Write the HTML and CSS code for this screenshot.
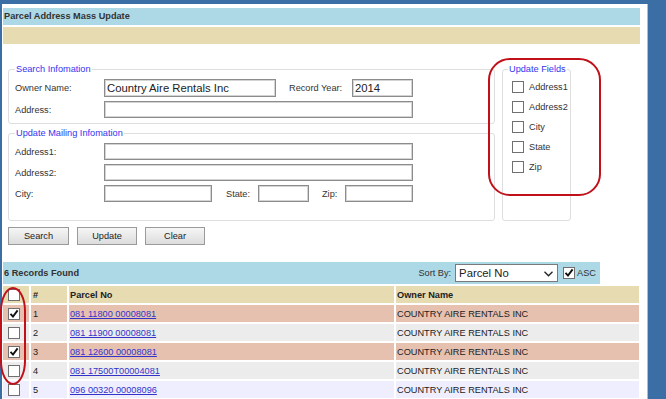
FILE: index.html
```html
<!DOCTYPE html>
<html lang="en">
<head>
    <meta charset="UTF-8">
    <title>Parcel Address Mass Update</title>
    <link rel="stylesheet" href="styles.css">
</head>
<body>
    <div class="page">
        <div class="panel">
            <!-- Title and message bars -->
            <div class="title-bar">Parcel Address Mass Update</div>
            <div class="message-bar"></div>

            <!-- Search and update forms -->
            <div class="search-area">
                <div class="search-left">
                    <fieldset class="group group-search">
                        <legend>Search Infomation</legend>
                        <div class="field-row field-row-tall">
                            <label class="lbl">Owner Name:</label>
                            <input class="txt w-owner" type="text" value="Country Aire Rentals Inc">
                            <label class="lbl lbl-year">Record Year:</label>
                            <input class="txt w-year" type="text" value="2014">
                        </div>
                        <div class="field-row">
                            <label class="lbl">Address:</label>
                            <input class="txt w-full" type="text">
                        </div>
                    </fieldset>

                    <fieldset class="group group-mailing">
                        <legend>Update Mailing Infomation</legend>
                        <div class="field-row">
                            <label class="lbl">Address1:</label>
                            <input class="txt w-full" type="text">
                        </div>
                        <div class="field-row">
                            <label class="lbl">Address2:</label>
                            <input class="txt w-full" type="text">
                        </div>
                        <div class="field-row">
                            <label class="lbl">City:</label>
                            <input class="txt w-city" type="text">
                            <label class="lbl lbl-state">State:</label>
                            <input class="txt w-state" type="text">
                            <label class="lbl lbl-zip">Zip:</label>
                            <input class="txt w-zip" type="text">
                        </div>
                    </fieldset>
                </div>

                <fieldset class="group group-fields">
                    <legend>Update Fields</legend>
                    <div class="check-row"><span class="cb"></span>Address1</div>
                    <div class="check-row"><span class="cb"></span>Address2</div>
                    <div class="check-row"><span class="cb"></span>City</div>
                    <div class="check-row"><span class="cb"></span>State</div>
                    <div class="check-row"><span class="cb"></span>Zip</div>
                </fieldset>
            </div>

            <!-- Action buttons -->
            <div class="actions">
                <button class="btn btn-search">Search</button>
                <button class="btn">Update</button>
                <button class="btn">Clear</button>
            </div>

            <!-- Results -->
            <div class="results-bar">
                <span class="results-count">6 Records Found</span>
                <div class="sort">
                    <span class="sort-label">Sort By:</span>
                    <div class="select">
                        <span>Parcel No</span>
                        <svg class="chevron" width="9" height="6" viewBox="0 0 9 6"><path d="M0.5 0.8 L4.5 4.8 L8.5 0.8" fill="none" stroke="#222" stroke-width="1.3"/></svg>
                    </div>
                    <span class="cb checked"><svg width="10" height="10" viewBox="0 0 10 10"><path d="M1.5 4.8 L4 7.6 L8.6 1.4" fill="none" stroke="#111" stroke-width="1.9"/></svg></span>
                    <span class="sort-asc">ASC</span>
                </div>
            </div>

            <table class="results">
                <thead>
                    <tr>
                        <th class="col-check"><span class="cb"></span></th>
                        <th class="col-num">#</th>
                        <th class="col-parcel">Parcel No</th>
                        <th class="col-owner">Owner Name</th>
                    </tr>
                </thead>
                <tbody>
                    <tr class="row-selected">
                        <td class="col-check"><span class="cb checked"><svg width="10" height="10" viewBox="0 0 10 10"><path d="M1.5 4.8 L4 7.6 L8.6 1.4" fill="none" stroke="#111" stroke-width="1.9"/></svg></span></td>
                        <td class="col-num">1</td>
                        <td><a href="#">081 11800 00008081</a></td>
                        <td>COUNTRY AIRE RENTALS INC</td>
                    </tr>
                    <tr class="row-plain">
                        <td class="col-check"><span class="cb"></span></td>
                        <td class="col-num">2</td>
                        <td><a href="#">081 11900 00008081</a></td>
                        <td>COUNTRY AIRE RENTALS INC</td>
                    </tr>
                    <tr class="row-selected">
                        <td class="col-check"><span class="cb checked"><svg width="10" height="10" viewBox="0 0 10 10"><path d="M1.5 4.8 L4 7.6 L8.6 1.4" fill="none" stroke="#111" stroke-width="1.9"/></svg></span></td>
                        <td class="col-num">3</td>
                        <td><a href="#">081 12600 00008081</a></td>
                        <td>COUNTRY AIRE RENTALS INC</td>
                    </tr>
                    <tr class="row-plain">
                        <td class="col-check"><span class="cb"></span></td>
                        <td class="col-num">4</td>
                        <td><a href="#">081 17500T00004081</a></td>
                        <td>COUNTRY AIRE RENTALS INC</td>
                    </tr>
                    <tr class="row-alt">
                        <td class="col-check"><span class="cb"></span></td>
                        <td class="col-num">5</td>
                        <td><a href="#">096 00320 00008096</a></td>
                        <td>COUNTRY AIRE RENTALS INC</td>
                    </tr>
                </tbody>
            </table>
        </div>

        <!-- Red annotation marks drawn over the page -->
        <div class="mark mark-fields"></div>
        <div class="mark mark-checks"></div>
    </div>
</body>
</html>
```

FILE: styles.css
```css
/* Page frame */
body {
    margin: 0;
    background-color: #3b6ea5;
    font-family: "Liberation Sans", Arial, sans-serif;
    font-size: 9.2px;
    color: #333;
    overflow: hidden;
}

.page {
    position: relative;
    height: 399px;
}

/* White panel inside the blue frame */
.panel {
    box-sizing: border-box;
    width: 646px;
    min-height: 395px;
    margin: 4px 0 0 2px;
    padding: 4px 7px 0 1px;
    background-color: #fff;
    border-right: 1px solid #a8bfdc;
}

.title-bar {
    height: 17px;
    line-height: 17px;
    padding-left: 1px;
    background-color: #add8e6;
    font-weight: bold;
    color: #333;
}

.message-bar {
    height: 17px;
    margin-top: 2px;
    background-color: #e6dbb1;
}

/* Forms */
.search-area {
    display: flex;
    gap: 7px;
    margin: 19px 0 0 5px;
}

.search-left {
    display: flex;
    flex-direction: column;
    gap: 3px;
    width: 487px;
}

.group {
    box-sizing: border-box;
    min-width: 0;
    margin: 0;
    border: 1px solid #dedede;
    border-radius: 3px;
}

.group legend {
    padding: 0 1px;
    line-height: 12px;
    color: #3434f0;
    white-space: nowrap;
}

.group-search {
    padding: 4px 6px 5px 6px;
}

.group-mailing {
    padding: 4px 6px 18px 6px;
}

.group-fields {
    width: 69px;
    padding: 2px 0 0 5px;
}

.field-row {
    display: flex;
    align-items: center;
    height: 17px;
    margin-bottom: 4px;
}

.field-row:last-child {
    margin-bottom: 0;
}

.field-row-tall {
    height: 18px;
}

.lbl {
    width: 89px;
    flex: none;
}

.lbl-year { width: 63px; margin-left: 13px; }
.lbl-state { width: 32px; margin-left: 14px; }
.lbl-zip { width: 23px; margin-left: 13px; }

.txt {
    box-sizing: border-box;
    height: 100%;
    margin: 0;
    padding: 0 2px;
    border: 1px solid #8c8c8c;
    box-shadow: inset 0 0 0 1px #d4d4d4;
    font-family: "Liberation Sans", Arial, sans-serif;
    font-size: 11.3px;
    color: #222;
    background-color: #fff;
}

.w-owner { width: 172px; }
.w-year { width: 61px; }
.w-full { width: 309px; }
.w-city { width: 108px; }
.w-state { width: 51px; }
.w-zip { width: 68px; }

.check-row {
    display: flex;
    align-items: center;
    gap: 5px;
    height: 20px;
    margin-left: 4px;
    white-space: nowrap;
}

/* Checkbox boxes */
.cb {
    box-sizing: border-box;
    display: inline-flex;
    align-items: center;
    justify-content: center;
    width: 12px;
    height: 12px;
    flex: none;
    border: 1px solid #707070;
    background-color: #fff;
    vertical-align: middle;
}

/* Buttons */
.actions {
    display: flex;
    gap: 8px;
    margin: 6px 0 0 5px;
}

.btn {
    width: 60px;
    height: 18px;
    padding: 0;
    border: 1px solid #9a9a9a;
    background: linear-gradient(#f6f6f6, #dcdcdc);
    font-family: "Liberation Sans", Arial, sans-serif;
    font-size: 9.2px;
    color: #222;
}

.btn-search {
    width: 61px;
}

/* Results header */
.results-bar {
    display: flex;
    align-items: center;
    width: 597px;
    height: 22px;
    margin-top: 17px;
    padding: 0 4px 0 1px;
    box-sizing: border-box;
    background-color: #add8e6;
}

.results-count {
    font-weight: bold;
    color: #333;
}

.sort {
    display: flex;
    align-items: center;
    margin-left: auto;
}

.sort-label {
    margin-right: 4px;
}

.select {
    position: relative;
    box-sizing: border-box;
    width: 103px;
    height: 18px;
    padding-left: 3px;
    border: 1px solid #7a7a7a;
    background-color: #fff;
    font-size: 11.3px;
    line-height: 16px;
    color: #222;
    margin-right: 5px;
}

.chevron {
    position: absolute;
    right: 4px;
    top: 6px;
}

.sort-asc {
    margin-left: 2px;
    color: #333;
}

/* Results table */
.results {
    border-collapse: separate;
    border-spacing: 2px;
    margin-left: -2px;
    width: 640px;
    table-layout: fixed;
}

.results th,
.results td {
    height: 17px;
    padding: 0 1px;
    text-align: left;
    color: #222;
    white-space: nowrap;
}

.results th {
    background-color: #e6dbb1;
    font-weight: bold;
}

.results .col-check {
    width: 21px;
    padding: 0 0 0 5px;
    line-height: 0;
}

.results .col-num {
    width: 33px;
    padding-left: 2px;
}

.results .col-parcel {
    width: 323px;
}

.results a {
    color: #3333cc;
}

.row-selected td { background-color: #e6c1b0; }
.row-plain td { background-color: #ececec; }
.row-alt td { background-color: #eeeeff; }

/* Red annotation marks */
.mark {
    position: absolute;
    box-sizing: border-box;
    border: 2px solid #c0101a;
}

.mark-fields {
    left: 488px;
    top: 54px;
    width: 113px;
    height: 138px;
    border-radius: 22px;
}

.mark-checks {
    left: 0;
    top: 283px;
    width: 26px;
    height: 98px;
    border-radius: 13px / 24px;
}
```
